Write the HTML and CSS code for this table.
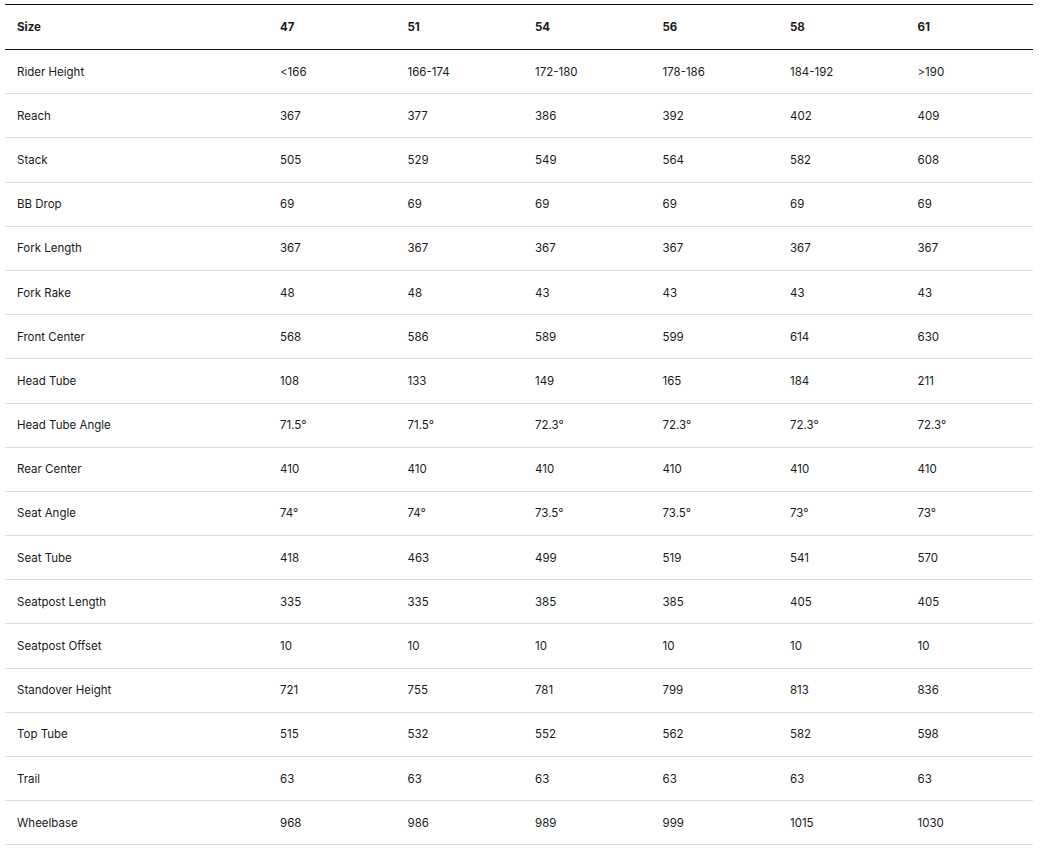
FILE: index.html
```html
<!DOCTYPE html>
<html>
<head>
<meta charset="utf-8">
<link rel="stylesheet" href="styles.css">
</head>
<body>
<div class="wrap">
<table class="geo">
<colgroup><col class="c-label"><col><col><col><col><col><col></colgroup>
<thead>
<tr><th>Size</th><th>47</th><th>51</th><th>54</th><th>56</th><th>58</th><th>61</th></tr>
</thead>
<tbody>
<tr><td>Rider Height</td><td>&lt;166</td><td>166-174</td><td>172-180</td><td>178-186</td><td>184-192</td><td>&gt;190</td></tr>
<tr><td>Reach</td><td>367</td><td>377</td><td>386</td><td>392</td><td>402</td><td>409</td></tr>
<tr><td>Stack</td><td>505</td><td>529</td><td>549</td><td>564</td><td>582</td><td>608</td></tr>
<tr><td>BB Drop</td><td>69</td><td>69</td><td>69</td><td>69</td><td>69</td><td>69</td></tr>
<tr><td>Fork Length</td><td>367</td><td>367</td><td>367</td><td>367</td><td>367</td><td>367</td></tr>
<tr><td>Fork Rake</td><td>48</td><td>48</td><td>43</td><td>43</td><td>43</td><td>43</td></tr>
<tr><td>Front Center</td><td>568</td><td>586</td><td>589</td><td>599</td><td>614</td><td>630</td></tr>
<tr><td>Head Tube</td><td>108</td><td>133</td><td>149</td><td>165</td><td>184</td><td>211</td></tr>
<tr><td>Head Tube Angle</td><td>71.5°</td><td>71.5°</td><td>72.3°</td><td>72.3°</td><td>72.3°</td><td>72.3°</td></tr>
<tr><td>Rear Center</td><td>410</td><td>410</td><td>410</td><td>410</td><td>410</td><td>410</td></tr>
<tr><td>Seat Angle</td><td>74°</td><td>74°</td><td>73.5°</td><td>73.5°</td><td>73°</td><td>73°</td></tr>
<tr><td>Seat Tube</td><td>418</td><td>463</td><td>499</td><td>519</td><td>541</td><td>570</td></tr>
<tr><td>Seatpost Length</td><td>335</td><td>335</td><td>385</td><td>385</td><td>405</td><td>405</td></tr>
<tr><td>Seatpost Offset</td><td>10</td><td>10</td><td>10</td><td>10</td><td>10</td><td>10</td></tr>
<tr><td>Standover Height</td><td>721</td><td>755</td><td>781</td><td>799</td><td>813</td><td>836</td></tr>
<tr><td>Top Tube</td><td>515</td><td>532</td><td>552</td><td>562</td><td>582</td><td>598</td></tr>
<tr><td>Trail</td><td>63</td><td>63</td><td>63</td><td>63</td><td>63</td><td>63</td></tr>
<tr><td>Wheelbase</td><td>968</td><td>986</td><td>989</td><td>999</td><td>1015</td><td>1030</td></tr>
</tbody>
</table>
</div>
</body>
</html>
```

FILE: styles.css
```css
html, body {
  margin: 0;
  padding: 0;
  background: #fff;
}
.wrap {
  padding: 4px 7px 0 5px;
}
.geo {
  width: 1028px;
  border-collapse: collapse;
  table-layout: fixed;
  font-family: Inter, "Noto Sans", sans-serif;
  font-size: 11.5px;
  color: #1a1a1a;
}
.c-label {
  width: 263px;
}
.geo th, .geo td {
  text-align: left;
  padding: 0 12px;
  vertical-align: middle;
  white-space: nowrap;
}
.geo thead th {
  font-weight: 700;
  height: 44px;
  border-top: 1px solid #111;
  border-bottom: 1px solid #111;
}
.geo tbody td {
  height: 43.2px;
  border-bottom: 1px solid #dcdcdc;
}
```
